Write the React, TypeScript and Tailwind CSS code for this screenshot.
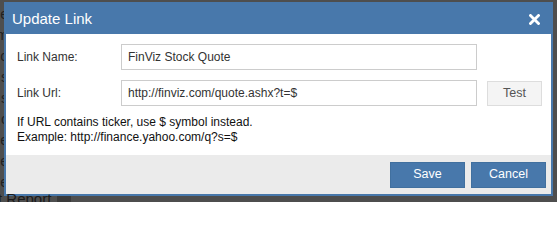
import { useState } from "react"

const BLUE = "bg-[#4878ab]"

export default function App() {
  const [name, setName] = useState("FinViz Stock Quote")
  const [url, setUrl] = useState("http://finviz.com/quote.ashx?t=$")

  return (
    <div className="h-[202px] w-[557px] overflow-hidden bg-[#4e4e4e] pt-[2px] font-['Liberation_Sans',Arial,sans-serif]">
      <div className="flex">
        {/* page behind the modal, mostly hidden */}
        <div className="flex w-[4px] flex-col items-end overflow-hidden pt-[2px] text-[14px] leading-[21px] text-[#1f1f1f]">
          {["e", "m", "o", "s", "s", "c", "e", "e", "e"].map((c, i) => (
            <span key={i} className="-mr-[4px]">
              {c}
            </span>
          ))}
        </div>

        <div className="flex h-[194px] w-[549px] flex-col border-2 border-[#4878ab] bg-white">
          <div className={`flex h-[30px] shrink-0 items-center justify-between ${BLUE} pl-[6px] pr-[11px] text-white`}>
            <span className="text-[15px]">Update Link</span>
            <button type="button" className="flex h-[12px] w-[12px] items-center justify-center">
              <svg width="11" height="11" viewBox="0 0 11 11">
                <path d="M1.5 1.5 L9.5 9.5 M9.5 1.5 L1.5 9.5" stroke="#ffffff" strokeWidth="2.8" strokeLinecap="square" />
              </svg>
            </button>
          </div>

          <div className="flex flex-1 flex-col pl-[11px] pt-[10px] text-[12px] text-[#333]">
            <div className="flex items-center">
              <label className="w-[104px]">Link Name:</label>
              <input
                value={name}
                onChange={(e) => setName(e.target.value)}
                className="h-[26px] w-[356px] border border-[#cccccc] px-[6px] text-[12px] text-[#333] outline-none"
              />
            </div>
            <div className="mt-[10px] flex items-center">
              <label className="w-[104px]">Link Url:</label>
              <input
                value={url}
                onChange={(e) => setUrl(e.target.value)}
                className="h-[26px] w-[356px] border border-[#cccccc] px-[6px] text-[12px] text-[#333] outline-none"
              />
              <button
                type="button"
                className="ml-[10px] h-[25px] w-[55px] border border-[#dddddd] bg-[#f4f4f4] text-[12.5px] text-[#555]"
              >
                Test
              </button>
            </div>
            <div className="mt-[9px] text-[12px] leading-[15px] text-[#111]">
              <div>If URL contains ticker, use $ symbol instead.</div>
              <div>Example: http://finance.yahoo.com/q?s=$</div>
            </div>
          </div>

          <div className="flex h-[39px] shrink-0 items-center justify-end gap-[6px] bg-[#ebebeb] pr-[5px]">
            <button type="button" className={`h-[26px] w-[75px] ${BLUE} border border-[#41709f] text-[12.5px] text-white`}>
              Save
            </button>
            <button type="button" className={`h-[26px] w-[75px] ${BLUE} border border-[#41709f] text-[12.5px] text-white`}>
              Cancel
            </button>
          </div>
        </div>
      </div>

      <div className="flex items-start">
        <span className="-mt-[5px] -ml-[2px] text-[15px] leading-[16px] text-[#1a1a1a]">t Report</span>
        <span className="ml-[6px] h-[6px] w-[14px] bg-[#3a3a3a]" />
      </div>
    </div>
  )
}
